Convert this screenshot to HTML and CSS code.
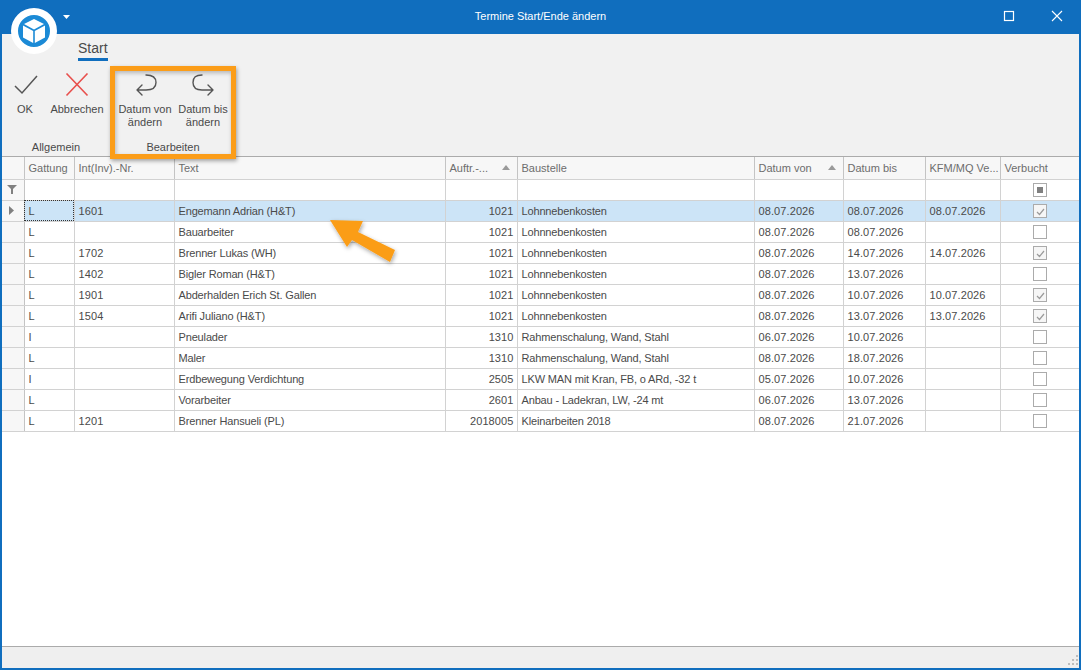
FILE: index.html
```html
<!DOCTYPE html>
<html lang="de">
<head>
    <meta charset="UTF-8">
    <meta name="viewport" content="width=device-width, initial-scale=1.0">
    <title>Termine Start/Ende ändern</title>
    <link rel="stylesheet" href="styles.css">
</head>
<body>
<div class="window">
    <div class="titlebar">
        <div class="title">Termine Start/Ende ändern</div>
        <div class="win-btns">
            <svg width="12" height="12" viewBox="0 0 12 12"><rect x="1.500" y="1.500" width="9" height="9" fill="none" stroke="#fff" stroke-width="1.2"/></svg>
            <svg width="12" height="12" viewBox="0 0 12 12"><path d="M1 1l10 10M11 1L1 11" stroke="#fff" stroke-width="1.1" fill="none"/></svg>
        </div>
    </div>

    <div class="ribbon">
        <div class="tabs"><span class="tab">Start</span></div>
        <div class="groups">
            <div class="group group-general">
                <div class="group-btns">
                    <div class="rbtn btn-ok">
                        <svg width="26" height="24" viewBox="0 0 26 24"><path d="M3 13l7 7L25 3" fill="none" stroke="#555" stroke-width="1.5"/></svg>
                        <span>OK</span>
                    </div>
                    <div class="rbtn btn-cancel">
                        <svg width="24" height="24" viewBox="0 0 24 24"><path d="M1.500 .5l21 22M22.500 .5l-21 22" fill="none" stroke="#e8504d" stroke-width="1.6"/></svg>
                        <span>Abbrechen</span>
                    </div>
                </div>
                <div class="group-label">Allgemein</div>
            </div>
            <div class="group group-edit">
                <div class="group-btns">
                    <div class="rbtn btn-from">
                        <svg width="24" height="24" viewBox="0 0 24 24"><path d="M13 2c6 0 10 2 10 7.500S19 17 13 17H4M9 12l-5 5 5 5" fill="none" stroke="#555" stroke-width="1.4" stroke-linecap="round" stroke-linejoin="round"/></svg>
                        <span>Datum von<br>ändern</span>
                    </div>
                    <div class="rbtn btn-to">
                        <svg width="24" height="24" viewBox="0 0 24 24"><path d="M11 2C5 2 2 4 2 9.500S5 17 11 17h11M17 12l5 5-5 5" fill="none" stroke="#555" stroke-width="1.4" stroke-linecap="round" stroke-linejoin="round"/></svg>
                        <span>Datum bis<br>ändern</span>
                    </div>
                </div>
                <div class="group-label">Bearbeiten</div>
            </div>
        </div>
    </div>

    <table class="grid">
        <colgroup>
            <col class="c-ind"><col class="c-gat"><col class="c-int"><col class="c-text"><col class="c-auf">
            <col class="c-bau"><col class="c-von"><col class="c-bis"><col class="c-kfm"><col class="c-ver">
        </colgroup>
        <thead>
            <tr>
                <th></th><th>Gattung</th><th>Int(Inv).-Nr.</th><th>Text</th>
                <th><span class="sorted">Auftr.-...</span></th>
                <th>Baustelle</th>
                <th><span class="sorted">Datum von</span></th>
                <th>Datum bis</th><th>KFM/MQ Ve...</th><th>Verbucht</th>
            </tr>
        </thead>
        <tbody>
            <tr class="filter">
                <td class="ind"><svg width="10" height="9" viewBox="0 0 10 9"><path d="M0 0h10L6 4v5H4V4z" fill="#808080"/></svg></td>
                <td></td><td></td><td></td><td></td><td></td><td></td><td></td><td></td>
                <td class="chk"><span class="box box-mixed"></span></td>
            </tr>
            <tr class="selected">
                <td class="ind"><svg width="5" height="9" viewBox="0 0 5 9"><path d="M0 0l5 4.500L0 9z" fill="#808080"/></svg></td>
                <td class="focused">L</td><td>1601</td><td>Engemann Adrian (H&amp;T)</td><td class="num">1021</td><td>Lohnnebenkosten</td><td>08.07.2026</td><td>08.07.2026</td><td>08.07.2026</td>
                <td class="chk"><span class="box box-on"><svg width="11" height="11" viewBox="0 0 11 11"><path d="M2 6l2.500 2.500L9 3" fill="none" stroke="#9a9a9a" stroke-width="1.2"/></svg></span></td>
            </tr>
            <tr>
                <td class="ind"></td><td>L</td><td></td><td>Bauarbeiter</td><td class="num">1021</td><td>Lohnnebenkosten</td><td>08.07.2026</td><td>08.07.2026</td><td></td>
                <td class="chk"><span class="box"></span></td>
            </tr>
            <tr>
                <td class="ind"></td><td>L</td><td>1702</td><td>Brenner Lukas (WH)</td><td class="num">1021</td><td>Lohnnebenkosten</td><td>08.07.2026</td><td>14.07.2026</td><td>14.07.2026</td>
                <td class="chk"><span class="box box-on"><svg width="11" height="11" viewBox="0 0 11 11"><path d="M2 6l2.500 2.500L9 3" fill="none" stroke="#9a9a9a" stroke-width="1.2"/></svg></span></td>
            </tr>
            <tr>
                <td class="ind"></td><td>L</td><td>1402</td><td>Bigler Roman (H&amp;T)</td><td class="num">1021</td><td>Lohnnebenkosten</td><td>08.07.2026</td><td>13.07.2026</td><td></td>
                <td class="chk"><span class="box"></span></td>
            </tr>
            <tr>
                <td class="ind"></td><td>L</td><td>1901</td><td>Abderhalden Erich St. Gallen</td><td class="num">1021</td><td>Lohnnebenkosten</td><td>08.07.2026</td><td>10.07.2026</td><td>10.07.2026</td>
                <td class="chk"><span class="box box-on"><svg width="11" height="11" viewBox="0 0 11 11"><path d="M2 6l2.500 2.500L9 3" fill="none" stroke="#9a9a9a" stroke-width="1.2"/></svg></span></td>
            </tr>
            <tr>
                <td class="ind"></td><td>L</td><td>1504</td><td>Arifi Juliano (H&amp;T)</td><td class="num">1021</td><td>Lohnnebenkosten</td><td>08.07.2026</td><td>13.07.2026</td><td>13.07.2026</td>
                <td class="chk"><span class="box box-on"><svg width="11" height="11" viewBox="0 0 11 11"><path d="M2 6l2.500 2.500L9 3" fill="none" stroke="#9a9a9a" stroke-width="1.2"/></svg></span></td>
            </tr>
            <tr>
                <td class="ind"></td><td>I</td><td></td><td>Pneulader</td><td class="num">1310</td><td>Rahmenschalung, Wand, Stahl</td><td>06.07.2026</td><td>10.07.2026</td><td></td>
                <td class="chk"><span class="box"></span></td>
            </tr>
            <tr>
                <td class="ind"></td><td>L</td><td></td><td>Maler</td><td class="num">1310</td><td>Rahmenschalung, Wand, Stahl</td><td>08.07.2026</td><td>18.07.2026</td><td></td>
                <td class="chk"><span class="box"></span></td>
            </tr>
            <tr>
                <td class="ind"></td><td>I</td><td></td><td>Erdbewegung Verdichtung</td><td class="num">2505</td><td>LKW MAN mit Kran, FB, o ARd, -32 t</td><td>05.07.2026</td><td>10.07.2026</td><td></td>
                <td class="chk"><span class="box"></span></td>
            </tr>
            <tr>
                <td class="ind"></td><td>L</td><td></td><td>Vorarbeiter</td><td class="num">2601</td><td>Anbau - Ladekran, LW, -24 mt</td><td>06.07.2026</td><td>13.07.2026</td><td></td>
                <td class="chk"><span class="box"></span></td>
            </tr>
            <tr>
                <td class="ind"></td><td>L</td><td>1201</td><td>Brenner Hansueli (PL)</td><td class="num">2018005</td><td>Kleinarbeiten 2018</td><td>08.07.2026</td><td>21.07.2026</td><td></td>
                <td class="chk"><span class="box"></span></td>
            </tr>
        </tbody>
    </table>
    <div class="grid-fill"></div>

    <div class="statusbar">
        <svg width="11" height="11" viewBox="0 0 11 11" fill="#bdbdbd"><rect x="8" y="0" width="2" height="2"/><rect x="4" y="4" width="2" height="2"/><rect x="8" y="4" width="2" height="2"/><rect x="0" y="8" width="2" height="2"/><rect x="4" y="8" width="2" height="2"/><rect x="8" y="8" width="2" height="2"/></svg>
    </div>

    <!-- app logo sits over titlebar and ribbon -->
    <div class="logo">
        <svg width="22" height="24" viewBox="0 0 22 24" fill="#fff"><path d="M11 0l10 5-10 5.500L1 5z"/><path d="M0 6.500l10.200 5.600V24L0 18.500z"/><path d="M22 6.500l-10.200 5.600V24L22 18.500z"/></svg>
    </div>
    <svg class="logo-caret" width="7" height="4" viewBox="0 0 7 4"><path d="M0 0h7L3.500 4z" fill="#fff"/></svg>

    <!-- annotations drawn on the screenshot -->
    <div class="mark-box"></div>
    <svg class="mark-arrow" width="66" height="43" viewBox="0 0 66 43">
        <defs><filter id="soft" x="-20%" y="-20%" width="150%" height="150%"><feDropShadow dx="1" dy="2" stdDeviation="2" flood-color="#000" flood-opacity=".35"/></filter></defs>
        <path d="M0 0L33 1 28 12 65 30 60 42 22 20 17 27z" fill="#fb9d19" filter="url(#soft)"/>
    </svg>
</div>
</body>
</html>
```

FILE: styles.css
```css
:root {
    --blue: #106ebe;
    --line: #d2d2d2;
    --text: #4a4a4a;
    --orange: #fb9d19;
}
* {
    box-sizing: border-box;
}
html, body {
    margin: 0;
    height: 100%;
}
body {
    font-family: "Liberation Sans", Arial, sans-serif;
    font-size: 11px;
    color: var(--text);
}
.window {
    position: relative;
    width: 1081px;
    height: 670px;
    display: flex;
    flex-direction: column;
    background: #fff;
    border: 2px solid var(--blue);
    border-top: none;
    overflow: hidden;
}
.titlebar {
    flex: none;
    height: 34px;
    margin: 0 -2px;
    background: var(--blue);
    position: relative;
    display: flex;
    align-items: center;
    justify-content: center;
}
.title {
    color: #fff;
    margin-top: -2px;
}
.win-btns {
    position: absolute;
    right: 18px;
    top: 10px;
    display: flex;
    gap: 36px;
}
.ribbon {
    flex: none;
    height: 123px;
    background: #f1f1f1;
    border-bottom: 1px solid #ababab;
}
.tabs {
    height: 27px;
    padding: 6px 0 0 76px;
}
.tab {
    display: inline-block;
    height: 21px;
    font-size: 14px;
    line-height: 17px;
    border-bottom: 3px solid var(--blue);
}
.groups {
    display: flex;
    padding-top: 6px;
}
.group {
    display: flex;
    flex-direction: column;
    height: 89px;
}
.group-general {
    width: 108px;
}
.group-edit {
    width: 126px;
}
.group-btns {
    flex: 1;
    display: flex;
}
.group-label {
    text-align: center;
    height: 16px;
    line-height: 14px;
}
.rbtn {
    display: flex;
    flex-direction: column;
    align-items: center;
    text-align: center;
    line-height: 13px;
    padding-top: 6px;
}
.rbtn svg {
    margin-bottom: 6px;
}
.btn-ok {
    width: 46px;
}
.btn-cancel {
    width: 58px;
}
.btn-from, .btn-to {
    width: 58px;
}
.btn-from {
    margin-left: 6px;
}
.grid {
    flex: none;
    width: 1079px;
    margin-left: -2px;
    border-collapse: collapse;
    table-layout: fixed;
}
.c-ind { width: 24px; }
.c-gat { width: 50px; }
.c-int { width: 100px; }
.c-text { width: 271px; }
.c-auf { width: 72px; }
.c-bau { width: 237px; }
.c-von { width: 89px; }
.c-bis { width: 82px; }
.c-kfm { width: 75px; }
.c-ver { width: 79px; }
th {
    height: 22px;
    padding: 0 3px 0 4px;
    background: #f7f7f7;
    border-right: 1px solid #c4c4c4;
    border-bottom: 1px solid var(--line);
    font-weight: normal;
    text-align: left;
    color: #6d6d6d;
    white-space: nowrap;
    overflow: hidden;
}
.sorted {
    display: flex;
    align-items: center;
    justify-content: space-between;
    padding-right: 4px;
}
.sorted::after {
    content: "";
    border: 4.500px solid transparent;
    border-top: none;
    border-bottom: 5px solid #9a9a9a;
}
td {
    height: 21px;
    padding: 0 3px 0 4px;
    border-right: 1px solid var(--line);
    border-bottom: 1px solid var(--line);
    white-space: nowrap;
    overflow: hidden;
    letter-spacing: -.15px;
}
/* digits run a little wider than the letters in this grid */
td:nth-child(3), td.num, td:nth-child(n+7) {
    letter-spacing: .1px;
}
.num {
    text-align: right;
}
td.ind {
    background: #f7f7f7;
    text-align: center;
    padding: 0;
    line-height: 0;
    border-right-color: #c4c4c4;
}
.selected td:not(.ind) {
    background: #cce4f7;
}
td.focused {
    outline: 1px dotted #333;
    outline-offset: -1px;
}
.chk {
    padding: 0;
    text-align: center;
    line-height: 0;
}
.box {
    display: inline-block;
    width: 14px;
    height: 14px;
    padding: 1px;
    background: #fff;
    border: 1px solid #ababab;
    vertical-align: middle;
}
.box-on {
    background: #f6f6f6;
}
.box-mixed {
    position: relative;
}
.box-mixed::after {
    content: "";
    position: absolute;
    left: 3px;
    top: 3px;
    width: 6px;
    height: 6px;
    background: #808080;
}
.grid-fill {
    flex: 1;
}
.statusbar {
    flex: none;
    height: 22px;
    background: #efefef;
    border-top: 1px solid #ababab;
    display: flex;
    justify-content: flex-end;
    align-items: flex-end;
    padding: 0 0 2px 0;
}
.logo {
    position: absolute;
    left: 9px;
    top: 8px;
    width: 46px;
    height: 46px;
    border-radius: 50%;
    background: #1b8ad6;
    border: 7px solid #fff;
    display: flex;
    align-items: center;
    justify-content: center;
}
.logo-caret {
    position: absolute;
    left: 61px;
    top: 15px;
}
.mark-box {
    position: absolute;
    left: 108px;
    top: 66px;
    width: 126px;
    height: 93px;
    border: 5px solid var(--orange);
    box-shadow: 1px 2px 4px rgba(0, 0, 0, .35), inset 1px 2px 4px rgba(0, 0, 0, .25);
}
.mark-arrow {
    position: absolute;
    left: 328px;
    top: 220px;
    overflow: visible;
}
```
